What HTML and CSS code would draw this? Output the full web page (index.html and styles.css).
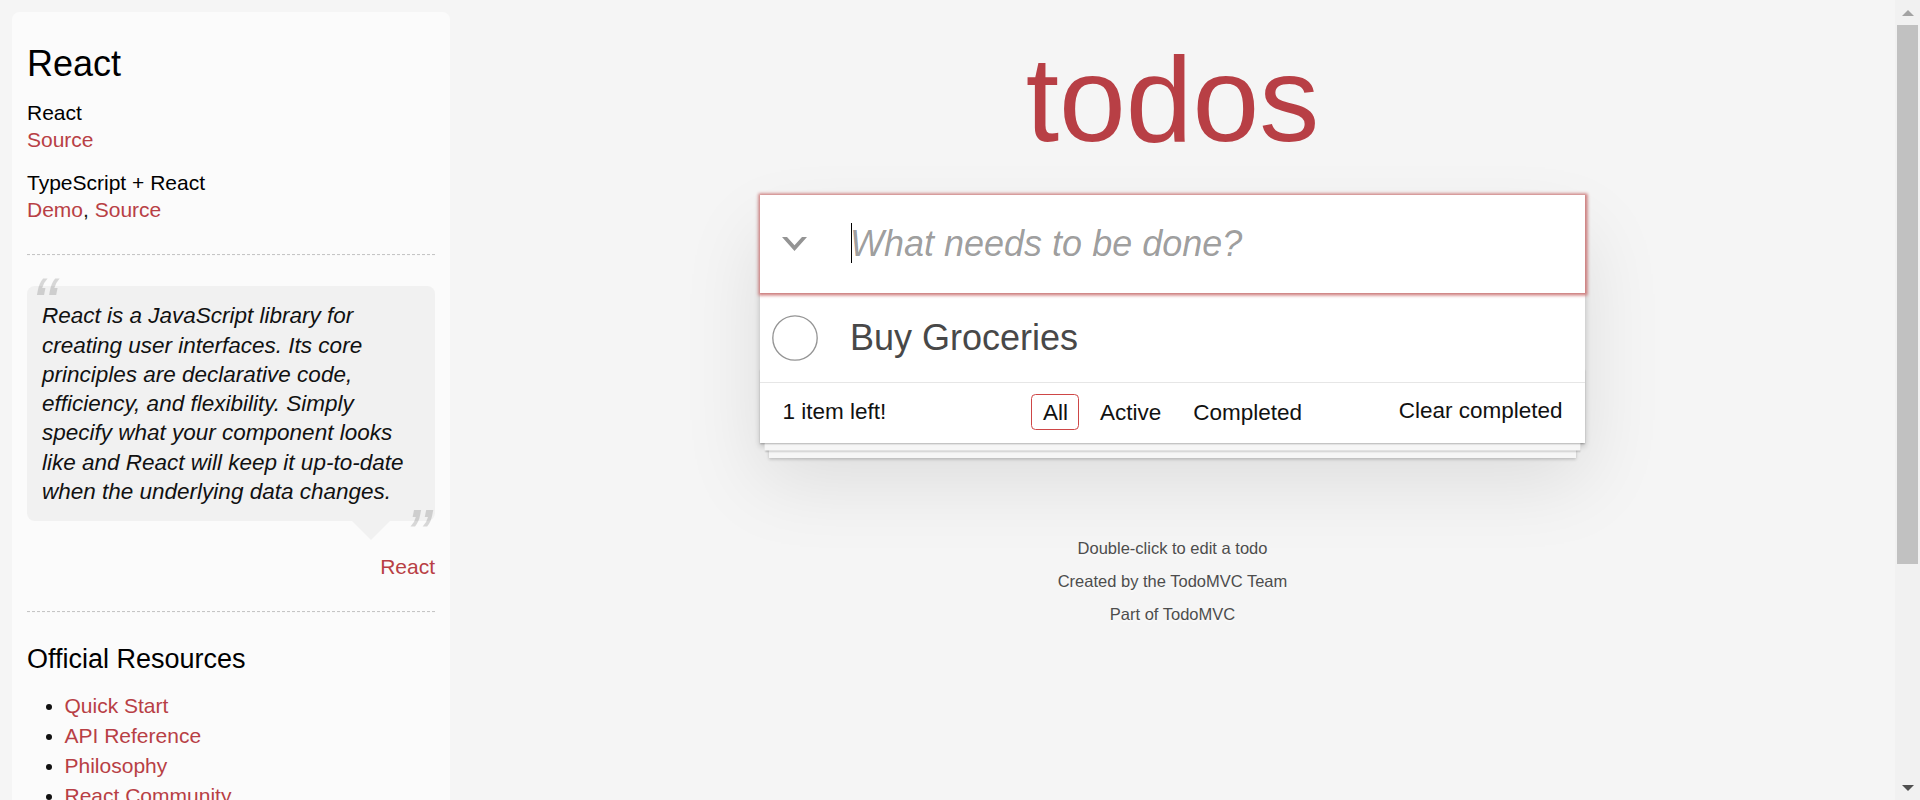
FILE: index.html
```html
<!DOCTYPE html>
<html lang="en">
<head>
<meta charset="utf-8">
<title>React • TodoMVC</title>
<link rel="stylesheet" href="styles.css">
</head>
<body>
<div class="page">
  <aside class="learn">
    <header class="learn-head">
      <h3 class="learn-title">React</h3>
      <h5 class="src-title">React</h5>
      <div class="src-links"><a href="#">Source</a></div>
      <h5 class="src-title">TypeScript + React</h5>
      <div class="src-links"><a href="#">Demo</a>, <a href="#">Source</a></div>
    </header>
    <hr class="rule">
    <blockquote class="quote">
      <p class="quote-text">React is a JavaScript library for creating user interfaces. Its core principles are declarative code, efficiency, and flexibility. Simply specify what your component looks like and React will keep it up-to-date when the underlying data changes.</p>
    </blockquote>
    <div class="quote-source"><a href="#">React</a></div>
    <hr class="rule">
    <h4 class="res-title">Official Resources</h4>
    <ul class="res-list">
      <li><a href="#">Quick Start</a></li>
      <li><a href="#">API Reference</a></li>
      <li><a href="#">Philosophy</a></li>
      <li><a href="#">React Community</a></li>
    </ul>
    <h4 class="res-title">Community</h4>
    <ul class="res-list">
      <li><a href="#">ReactJS on Stack Overflow</a></li>
    </ul>
  </aside>

  <main class="main-col">
    <div class="app-wrap">
      <h1 class="title">todos</h1>
      <section class="todoapp">
        <div class="new-row">
          <label class="toggle-all" for="new-todo">
            <svg class="chevron" width="25" height="15" viewBox="0 0 25 15"><polygon points="0,0 5,0 12.5,8.2 20,0 25,0 12.5,14" fill="#949494"/></svg>
          </label>
          <input id="new-todo" class="new-todo" placeholder="What needs to be done?">
          <span class="caret"></span>
        </div>
        <ul class="todo-list">
          <li class="todo-item">
            <svg class="todo-check" width="46" height="46" viewBox="0 0 46 46"><circle cx="23" cy="23" r="22.2" fill="none" stroke="#949494" stroke-width="1.33"/></svg>
            <span class="todo-label">Buy Groceries</span>
          </li>
        </ul>
        <footer class="footer">
          <span class="todo-count">1 item left!</span>
          <ul class="filters"><li><a href="#" class="selected">All</a></li><li><a href="#">Active</a></li><li><a href="#">Completed</a></li></ul>
          <button class="clear-completed">Clear completed</button>
        </footer>
      </section>
      <footer class="info">
        <p>Double-click to edit a todo</p>
        <p>Created by <a href="#">the TodoMVC Team</a></p>
        <p>Part of <a href="#">TodoMVC</a></p>
      </footer>
    </div>
  </main>

  <div class="scrollbar">
    <div class="sb-btn"><span class="sb-up"></span></div>
    <div class="sb-thumb"></div>
    <div class="sb-track"></div>
    <div class="sb-btn"><span class="sb-down"></span></div>
  </div>
</div>
</body>
</html>
```

FILE: styles.css
```css
* { box-sizing: border-box; }

html, body {
  margin: 0;
  padding: 0;
  height: 100%;
}

body {
  font-family: "Liberation Sans", Arial, Helvetica, sans-serif;
  font-size: 21px;
  line-height: 29.4px;
  color: #111;
  background: #f5f5f5;
  overflow: hidden;
}

.page {
  display: flex;
  height: 800px;
  overflow: hidden;
}

/* ---------- Sidebar ---------- */
.learn {
  flex: 0 0 438px;
  align-self: flex-start;
  margin: 12px 0 0 12px;
  padding: 15px;
  border-radius: 7.5px;
  background: rgba(255, 255, 255, 0.6);
}

.learn a {
  color: #b83f45;
  text-decoration: none;
  font-weight: 400;
}

.learn-title {
  margin: 15px 0;
  font-size: 36px;
  font-weight: 400;
  line-height: 1.2;
  color: #000;
}

.src-title {
  margin: 15px 0 0;
  font-size: 21px;
  font-weight: 400;
  line-height: 1.2;
  color: #000;
}

.src-links {
  line-height: 29.4px;
}

.rule {
  margin: 30px 0;
  height: 0;
  border: 0;
  border-top: 1px dashed #c5c5c5;
  border-bottom: 1px dashed #f7f7f7;
}

.quote {
  position: relative;
  margin: 30px 0 0;
  padding: 15px;
  background: rgba(0, 0, 0, 0.04);
  border-radius: 7.5px;
}

.quote::after {
  content: '';
  position: absolute;
  top: 100%;
  right: 45px;
  border: 19.5px solid transparent;
  border-top-color: rgba(0, 0, 0, 0.04);
}

.quote-text {
  margin: 0;
  font-size: 22.5px;
  line-height: 1.3;
  font-style: italic;
  color: #111;
}

.quote-text::before {
  content: '\201C';
  position: absolute;
  top: -30px;
  left: 4.5px;
  font-size: 75px;
  opacity: 0.15;
}

.quote-text::after {
  content: '\201D';
  position: absolute;
  bottom: -63px;
  right: 4.5px;
  font-size: 75px;
  opacity: 0.15;
}

.quote-source {
  margin-top: 30.6px;
  text-align: right;
  line-height: 29.4px;
}

.res-title {
  margin: 15px 0;
  font-size: 27px;
  font-weight: 400;
  line-height: 1.2;
  color: #000;
}

.res-list {
  margin: 0 0 45px 37.5px;
  padding: 0;
}

.res-list li {
  line-height: 30px;
}

/* ---------- Main ---------- */
.main-col {
  flex: 1;
  min-width: 0;
}

.app-wrap {
  width: 825px;
  margin: 0 auto;
}

.title {
  margin: 39px 0 0;
  font-size: 120px;
  line-height: 120px;
  font-weight: 400;
  text-align: center;
  color: #b83f45;
}

.todoapp {
  position: relative;
  margin: 36px 0 0;
  background: #fff;
  box-shadow: 0 3px 6px 0 rgba(0, 0, 0, 0.2), 0 37.5px 75px 0 rgba(0, 0, 0, 0.1);
}

.new-row {
  position: relative;
  display: flex;
  height: 97.5px;
  background: #fff;
  box-shadow: 0 0 3px 2.5px #cf7d7d;
}

.toggle-all {
  flex: 0 0 67.5px;
  display: flex;
  align-items: center;
  justify-content: center;
  padding: 2px 0 0 1px;
}

.chevron { display: block; }

.new-todo {
  flex: 1;
  min-width: 0;
  height: 97.5px;
  margin: 0;
  padding: 0 22.5px;
  border: 0;
  outline: 0;
  background: transparent;
  font-family: inherit;
  font-size: 36px;
  line-height: 1.4em;
  color: #111;
  caret-color: transparent;
}

.new-todo::placeholder {
  font-style: italic;
  font-weight: 400;
  color: rgba(0, 0, 0, 0.4);
}

.caret {
  position: absolute;
  left: 90.5px;
  top: 28px;
  width: 1.5px;
  height: 40px;
  background: #000;
}

.todo-list {
  list-style: none;
  margin: 0;
  padding: 0;
  border-top: 1px solid #e6e6e6;
}

.todo-item {
  display: flex;
  align-items: center;
  font-size: 36px;
  border-bottom: 1px solid #ededed;
}

.todo-item:last-child {
  border-bottom: none;
}

.todo-check {
  flex: none;
  display: block;
  margin-left: 11.5px;
}

.todo-label {
  flex: 1;
  padding: 22.5px 22.5px 22.5px 32.5px;
  line-height: 1.2;
  color: #484848;
  font-weight: 400;
  word-break: break-all;
}

.footer {
  position: relative;
  display: grid;
  grid-template-columns: 1fr auto 1fr;
  align-items: start;
  height: 61px;
  padding: 14.5px 22.5px 15px;
  border-top: 1px solid #e6e6e6;
  font-size: 22.5px;
  line-height: 29.4px;
  color: #111;
}

.footer::before {
  content: '';
  position: absolute;
  right: 0;
  bottom: 0;
  left: 0;
  height: 75px;
  overflow: hidden;
  pointer-events: none;
  box-shadow: 0 1.5px 1.5px rgba(0, 0, 0, 0.2),
              0 12px 0 -4.5px #f6f6f6,
              0 13.5px 1.5px -4.5px rgba(0, 0, 0, 0.2),
              0 24px 0 -9px #f6f6f6,
              0 25.5px 3px -9px rgba(0, 0, 0, 0.2);
}

.todo-count {
  justify-self: start;
  text-align: left;
}

.filters {
  margin: 0;
  padding: 0;
  list-style: none;
  text-align: center;
}

.filters li {
  display: inline;
}

.filters a {
  color: inherit;
  margin: 4.5px;
  padding: 4.5px 10.5px;
  text-decoration: none;
  border: 1px solid transparent;
  border-radius: 4.5px;
}

.filters a.selected {
  border-color: #ce4646;
}

.clear-completed {
  justify-self: end;
  margin: 0;
  padding: 0;
  border: 0;
  background: none;
  font-family: inherit;
  font-size: 22.5px;
  line-height: 28.5px;
  color: inherit;
  cursor: pointer;
}

.info {
  margin: 97px auto 0;
  color: #4d4d4d;
  font-size: 16.5px;
  text-align: center;
  text-shadow: 0 1.5px 0 rgba(255, 255, 255, 0.5);
}

.info p {
  margin: 16.5px 0;
  line-height: 1;
}

.info a {
  color: inherit;
  text-decoration: none;
}

/* ---------- Scrollbar ---------- */
.scrollbar {
  flex: 0 0 25px;
  display: flex;
  flex-direction: column;
  background: #f1f1f1;
}

.sb-btn {
  flex: 0 0 25px;
  display: flex;
  align-items: center;
  justify-content: center;
}

.sb-up {
  width: 0;
  height: 0;
  border-left: 6px solid transparent;
  border-right: 6px solid transparent;
  border-bottom: 6px solid #a3a3a3;
}

.sb-down {
  width: 0;
  height: 0;
  border-left: 6px solid transparent;
  border-right: 6px solid transparent;
  border-top: 6px solid #505050;
}

.sb-thumb {
  flex: 0 0 539px;
  margin: 0 2px 0 2px;
  background: #c1c1c1;
}

.sb-track {
  flex: 1;
}
```
